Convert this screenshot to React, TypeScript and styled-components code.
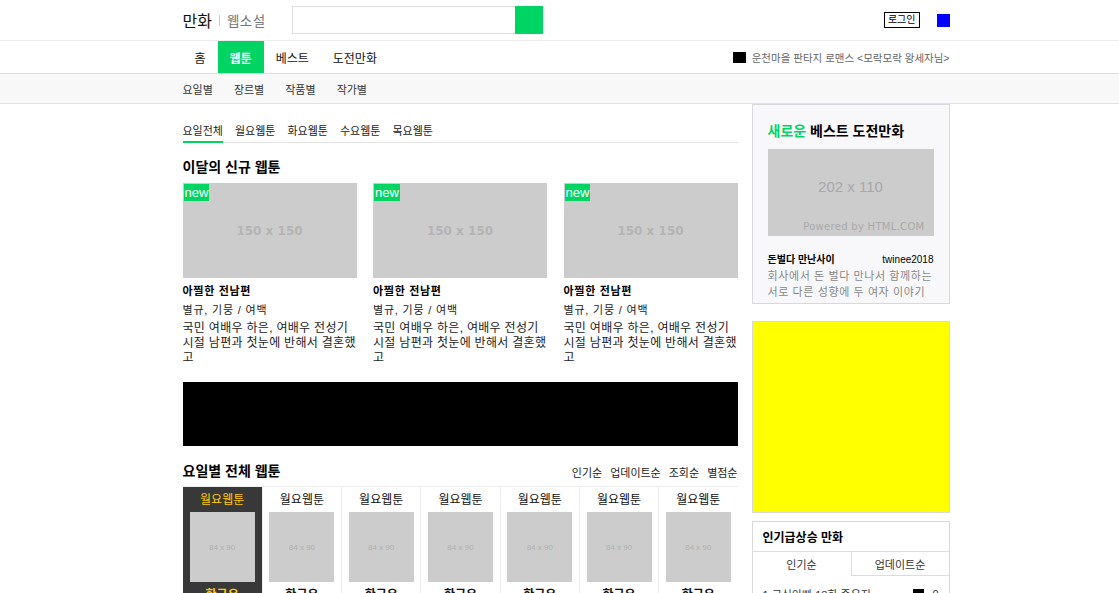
import React from "react";
import styled, { createGlobalStyle } from "styled-components";

const Global = createGlobalStyle`
  html, body { margin: 0; padding: 0; background: #fff; }
  body {
    font-family: "Liberation Sans", "Noto Sans CJK KR", sans-serif;
    color: #000;
    font-size: 12px;
  }
  * { box-sizing: border-box; }
`;

const Inner = styled.div`
  width: 767px;
  margin-left: calc(50% - 377px);
  display: flex;
  align-items: center;
`;

const TopBar = styled.header`
  height: 41px;
  border-bottom: 1px solid #ececec;
`;
const TopInner = styled(Inner)`
  height: 40px;
`;
const Logo = styled.div`
  width: 109px;
  display: flex;
  align-items: center;
  gap: 7px;
  font-size: 16px;
  color: #111;
`;
const Sep = styled.span`
  width: 1px;
  height: 11px;
  background: #ccc;
`;
const SubLogo = styled.span`
  font-size: 13.5px;
  color: #777;
  letter-spacing: 0.5px;
`;
const Search = styled.div`
  width: 251px;
  height: 28px;
  border: 1px solid #ddd;
  display: flex;
  justify-content: flex-end;
`;
const SearchBtn = styled.div`
  width: 28px;
  height: 28px;
  margin: -1px -1px 0 0;
  background: #00d564;
`;
const Right = styled.div`
  margin-left: auto;
  display: flex;
  align-items: center;
  gap: 17px;
`;
const LoginBtn = styled.div`
  border: 1px solid #000;
  font-size: 10px;
  line-height: 14px;
  padding: 0 3px;
`;
const BlueSq = styled.div`
  width: 13px;
  height: 13px;
  background: #0000ff;
`;

const Nav = styled.nav`
  height: 33px;
  border-bottom: 1px solid #dedede;
`;
const NavInner = styled(Inner)`
  height: 32px;
  align-items: stretch;
`;
const NavItem = styled.div<{ $active?: boolean }>`
  display: flex;
  align-items: center;
  padding: 0 12px;
  font-size: 12px;
  background: ${(p) => (p.$active ? "#00d564" : "transparent")};
  color: ${(p) => (p.$active ? "#fff" : "#111")};
  font-weight: ${(p) => (p.$active ? "bold" : "normal")};
`;
const Notice = styled.div`
  margin-left: auto;
  display: flex;
  align-items: center;
  gap: 6px;
  font-size: 10.5px;
  color: #666;
`;
const BlackSq = styled.span`
  width: 13px;
  height: 11px;
  background: #000;
  display: inline-block;
`;

const SubNav = styled.div`
  height: 30px;
  background: #f8f8f8;
  border-bottom: 1px solid #e2e2e2;
`;
const SubInner = styled(Inner)`
  height: 29px;
  gap: 21px;
  font-size: 11px;
  color: #333;
`;

const Main = styled.div`
  width: 767px;
  margin-left: calc(50% - 377px);
  display: flex;
  gap: 14px;
  align-items: flex-start;
`;
const LeftCol = styled.div`
  width: 555px;
`;
const RightCol = styled.aside`
  width: 198px;
  display: flex;
  flex-direction: column;
`;

const Tabs = styled.div`
  margin-top: 19px;
  display: flex;
  gap: 12px;
  border-bottom: 1px solid #e3e3e3;
`;
const Tab = styled.div<{ $active?: boolean }>`
  font-size: 11px;
  line-height: 17px;
  padding-bottom: 1px;
  color: #222;
  border-bottom: 2px solid ${(p) => (p.$active ? "#00d564" : "transparent")};
  margin-bottom: -1px;
`;

const SectionTitle = styled.h2`
  margin: 15px 0 0;
  font-size: 14px;
  line-height: 18px;
  font-weight: bold;
`;
const RowTitle = styled.h2`
  margin: 0;
  font-size: 14px;
  line-height: 18px;
  font-weight: bold;
`;

const Cards = styled.div`
  margin-top: 7px;
  display: grid;
  grid-template-columns: repeat(3, 174px);
  justify-content: space-between;
`;
const Card = styled.div``;
const Thumb = styled.div<{ $h: number }>`
  position: relative;
  height: ${(p) => p.$h}px;
  background: #cccccc;
  display: flex;
  align-items: center;
  justify-content: center;
`;
const ThumbLabel = styled.span<{ $size: number; $bold?: boolean }>`
  font-size: ${(p) => p.$size}px;
  color: #b4b4b4;
  font-weight: ${(p) => (p.$bold ? "bold" : "normal")};
  font-family: "DejaVu Sans", "Liberation Sans", sans-serif;
`;
const NewBadge = styled.span`
  position: absolute;
  left: 1px;
  top: 1px;
  background: #00d564;
  color: #fff;
  font-size: 13px;
  line-height: 17px;
  padding: 0 1px;
`;
const CardTitle = styled.div`
  margin-top: 5px;
  font-size: 11px;
  line-height: 16px;
  font-weight: bold;
  letter-spacing: 0.7px;
`;
const CardGenre = styled.div`
  margin-top: 3px;
  font-size: 11px;
  line-height: 16px;
  color: #222;
  letter-spacing: 0.8px;
`;
const CardDesc = styled.div`
  margin-top: 3px;
  font-size: 12px;
  line-height: 15px;
  color: #222;
  letter-spacing: 0.3px;
`;

const Banner = styled.div`
  margin-top: 16px;
  height: 64px;
  background: #000;
`;

const TitleRow = styled.div`
  margin-top: 15px;
  display: flex;
  align-items: center;
  justify-content: space-between;
`;
const SortLinks = styled.div`
  display: flex;
  gap: 8px;
  font-size: 11px;
  color: #222;
  padding-top: 3px;
`;
const Week = styled.div`
  margin-top: 6px;
  border-top: 1px solid #eee;
  display: grid;
  grid-template-columns: repeat(7, 1fr);
  height: 120px;
  overflow: hidden;
`;
const Day = styled.div<{ $active?: boolean }>`
  background: ${(p) => (p.$active ? "#383838" : "#fff")};
  border-left: ${(p) => (p.$active ? "none" : "1px solid #eee")};
  display: flex;
  flex-direction: column;
  align-items: center;
  padding-top: 5px;
  color: ${(p) => (p.$active ? "#ffcc00" : "#111")};
`;
const DayName = styled.div`
  font-size: 12px;
  line-height: 16px;
`;
const DayThumb = styled.div`
  margin-top: 4px;
  width: 65px;
  height: 70px;
  background: #cccccc;
  display: flex;
  align-items: center;
  justify-content: center;
  font-size: 8px;
  color: #b0b0b0;
  font-family: "Liberation Sans", sans-serif;
`;
const DayTitle = styled.div`
  margin-top: 5px;
  font-size: 12px;
  line-height: 16px;
  font-weight: bold;
`;

const BestBox = styled.div`
  height: 200px;
  background: #f8f8fa;
  border: 1px solid #d8d8de;
  padding: 17px 15px 0;
`;
const BestTitle = styled.div`
  font-size: 14px;
  line-height: 18px;
  font-weight: bold;
`;
const Green = styled.span`
  color: #00d564;
`;
const BestThumb = styled.div`
  margin-top: 9px;
  height: 87px;
  background: #cccccc;
  position: relative;
  display: flex;
  align-items: center;
  justify-content: center;
  padding-bottom: 12px;
  color: #a8a8a8;
  font-size: 15px;
`;
const Powered = styled.span`
  position: absolute;
  right: 9px;
  bottom: 4px;
  font-size: 10px;
  color: #aaa;
  font-family: "DejaVu Sans", sans-serif;
  letter-spacing: 0.3px;
`;
const BestMeta = styled.div`
  margin-top: 16px;
  display: flex;
  justify-content: space-between;
  font-size: 10px;
  line-height: 16px;
`;
const BestName = styled.span`
  font-weight: bold;
`;
const BestDesc = styled.div`
  font-size: 11px;
  line-height: 16px;
  color: #888;
  letter-spacing: 0.6px;
`;

const AdBox = styled.div`
  margin-top: 17px;
  height: 192px;
  background: #ffff00;
  border: 1px solid #d8d8de;
`;

const RankBox = styled.div`
  margin-top: 8px;
  border: 1px solid #d8d8de;
  border-bottom: none;
  height: 80px;
  overflow: hidden;
`;
const RankHead = styled.div`
  height: 29px;
  display: flex;
  align-items: center;
  padding-left: 10px;
  font-size: 12px;
  font-weight: bold;
`;
const RankTabs = styled.div`
  display: grid;
  grid-template-columns: 1fr 1fr;
  border-top: 1px solid #ddd;
`;
const RankTab = styled.div<{ $active?: boolean }>`
  height: 24px;
  display: flex;
  align-items: center;
  justify-content: center;
  font-size: 11px;
  color: #333;
  border-left: ${(p) => (p.$active ? "none" : "1px solid #ddd")};
  border-bottom: ${(p) => (p.$active ? "none" : "1px solid #ddd")};
`;
const RankRow = styled.div`
  margin-top: 10px;
  padding: 0 10px;
  display: flex;
  align-items: center;
  font-size: 11px;
  color: #333;
`;
const RankMark = styled.span`
  margin-left: auto;
  width: 11px;
  height: 11px;
  background: #000;
  margin-right: 8px;
`;

const cards = [0, 1, 2];
const days = [0, 1, 2, 3, 4, 5, 6];

export default function App() {
  return (
    <>
      <Global />
      <TopBar>
        <TopInner>
          <Logo>
            <span>만화</span>
            <Sep />
            <SubLogo>웹소설</SubLogo>
          </Logo>
          <Search>
            <SearchBtn />
          </Search>
          <Right>
            <LoginBtn>로그인</LoginBtn>
            <BlueSq />
          </Right>
        </TopInner>
      </TopBar>
      <Nav>
        <NavInner>
          <NavItem>홈</NavItem>
          <NavItem $active>웹툰</NavItem>
          <NavItem>베스트</NavItem>
          <NavItem>도전만화</NavItem>
          <Notice>
            <BlackSq />
            <span>운천마을 판타지 로맨스 &lt;모락모락 왕세자님&gt;</span>
          </Notice>
        </NavInner>
      </Nav>
      <SubNav>
        <SubInner>
          <span>요일별</span>
          <span>장르별</span>
          <span>작품별</span>
          <span>작가별</span>
        </SubInner>
      </SubNav>
      <Main>
        <LeftCol>
          <Tabs>
            <Tab $active>요일전체</Tab>
            <Tab>월요웹툰</Tab>
            <Tab>화요웹툰</Tab>
            <Tab>수요웹툰</Tab>
            <Tab>목요웹툰</Tab>
          </Tabs>
          <SectionTitle>이달의 신규 웹툰</SectionTitle>
          <Cards>
            {cards.map((i) => (
              <Card key={i}>
                <Thumb $h={95}>
                  <NewBadge>new</NewBadge>
                  <ThumbLabel $size={12} $bold>150 x 150</ThumbLabel>
                </Thumb>
                <CardTitle>아찔한 전남편</CardTitle>
                <CardGenre>별규, 기뭉 / 여백</CardGenre>
                <CardDesc>
                  국민 여배우 하은, 여배우 전성기 시절 남편과 첫눈에 반해서 결혼했고
                </CardDesc>
              </Card>
            ))}
          </Cards>
          <Banner />
          <TitleRow>
            <RowTitle>요일별 전체 웹툰</RowTitle>
            <SortLinks>
              <span>인기순</span>
              <span>업데이트순</span>
              <span>조회순</span>
              <span>별점순</span>
            </SortLinks>
          </TitleRow>
          <Week>
            {days.map((i) => (
              <Day key={i} $active={i === 0}>
                <DayName>월요웹툰</DayName>
                <DayThumb>84 x 90</DayThumb>
                <DayTitle>한구우</DayTitle>
              </Day>
            ))}
          </Week>
        </LeftCol>
        <RightCol>
          <BestBox>
            <BestTitle>
              <Green>새로운</Green> 베스트 도전만화
            </BestTitle>
            <BestThumb>
              202 x 110
              <Powered>Powered by HTML.COM</Powered>
            </BestThumb>
            <BestMeta>
              <BestName>돈벌다 만난사이</BestName>
              <span>twinee2018</span>
            </BestMeta>
            <BestDesc>회사에서 돈 벌다 만나서 함께하는 서로 다른 성향에 두 여자 이야기</BestDesc>
          </BestBox>
          <AdBox />
          <RankBox>
            <RankHead>인기급상승 만화</RankHead>
            <RankTabs>
              <RankTab $active>인기순</RankTab>
              <RankTab>업데이트순</RankTab>
            </RankTabs>
            <RankRow>
              <span>1 극심아빠 18화 줌우지</span>
              <RankMark />
              <span>0</span>
            </RankRow>
          </RankBox>
        </RightCol>
      </Main>
    </>
  );
}
